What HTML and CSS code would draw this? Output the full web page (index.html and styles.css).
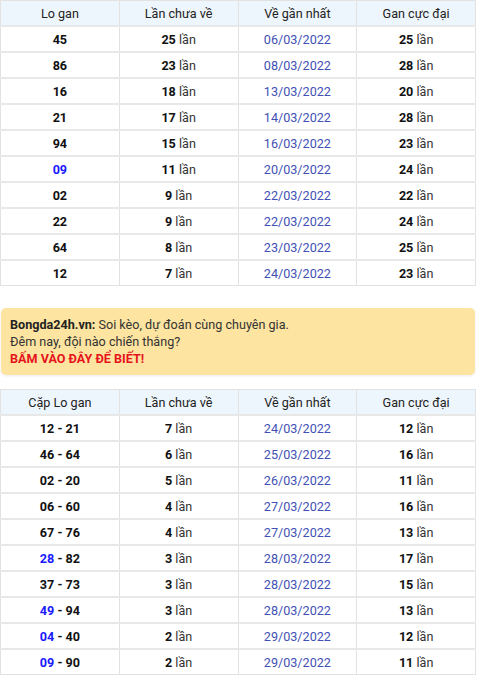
FILE: index.html
```html
<!DOCTYPE html>
<html lang="vi">
<head>
<meta charset="utf-8">
<link rel="stylesheet" href="styles.css">
</head>
<body>
<div class="page">
<table class="gan">
  <thead>
    <tr><th>Lo gan</th><th>Lần chưa về</th><th>Về gần nhất</th><th>Gan cực đại</th></tr>
  </thead>
  <tbody>
    <tr><td><b>45</b></td><td><b>25</b> lần</td><td class="date">06/03/2022</td><td><b>25</b> lần</td></tr>
    <tr><td><b>86</b></td><td><b>23</b> lần</td><td class="date">08/03/2022</td><td><b>28</b> lần</td></tr>
    <tr><td><b>16</b></td><td><b>18</b> lần</td><td class="date">13/03/2022</td><td><b>20</b> lần</td></tr>
    <tr><td><b>21</b></td><td><b>17</b> lần</td><td class="date">14/03/2022</td><td><b>28</b> lần</td></tr>
    <tr><td><b>94</b></td><td><b>15</b> lần</td><td class="date">16/03/2022</td><td><b>23</b> lần</td></tr>
    <tr><td><b class="hl">09</b></td><td><b>11</b> lần</td><td class="date">20/03/2022</td><td><b>24</b> lần</td></tr>
    <tr><td><b>02</b></td><td><b>9</b> lần</td><td class="date">22/03/2022</td><td><b>22</b> lần</td></tr>
    <tr><td><b>22</b></td><td><b>9</b> lần</td><td class="date">22/03/2022</td><td><b>24</b> lần</td></tr>
    <tr><td><b>64</b></td><td><b>8</b> lần</td><td class="date">23/03/2022</td><td><b>25</b> lần</td></tr>
    <tr><td><b>12</b></td><td><b>7</b> lần</td><td class="date">24/03/2022</td><td><b>23</b> lần</td></tr>
  </tbody>
</table>

<div class="promo">
  <div><b>Bongda24h.vn:</b> Soi kèo, dự đoán cùng chuyên gia.</div>
  <div>Đêm nay, đội nào chiến thắng?</div>
  <div class="cta">BẤM VÀO ĐÂY ĐỂ BIẾT!</div>
</div>

<table class="gan">
  <thead>
    <tr><th>Cặp Lo gan</th><th>Lần chưa về</th><th>Về gần nhất</th><th>Gan cực đại</th></tr>
  </thead>
  <tbody>
    <tr><td><b>12 - 21</b></td><td><b>7</b> lần</td><td class="date">24/03/2022</td><td><b>12</b> lần</td></tr>
    <tr><td><b>46 - 64</b></td><td><b>6</b> lần</td><td class="date">25/03/2022</td><td><b>16</b> lần</td></tr>
    <tr><td><b>02 - 20</b></td><td><b>5</b> lần</td><td class="date">26/03/2022</td><td><b>11</b> lần</td></tr>
    <tr><td><b>06 - 60</b></td><td><b>4</b> lần</td><td class="date">27/03/2022</td><td><b>16</b> lần</td></tr>
    <tr><td><b>67 - 76</b></td><td><b>4</b> lần</td><td class="date">27/03/2022</td><td><b>13</b> lần</td></tr>
    <tr><td><b><span class="hl">28</span> - 82</b></td><td><b>3</b> lần</td><td class="date">28/03/2022</td><td><b>17</b> lần</td></tr>
    <tr><td><b>37 - 73</b></td><td><b>3</b> lần</td><td class="date">28/03/2022</td><td><b>15</b> lần</td></tr>
    <tr><td><b><span class="hl">49</span> - 94</b></td><td><b>3</b> lần</td><td class="date">28/03/2022</td><td><b>13</b> lần</td></tr>
    <tr><td><b><span class="hl">04</span> - 40</b></td><td><b>2</b> lần</td><td class="date">29/03/2022</td><td><b>12</b> lần</td></tr>
    <tr><td><b><span class="hl">09</span> - 90</b></td><td><b>2</b> lần</td><td class="date">29/03/2022</td><td><b>11</b> lần</td></tr>
  </tbody>
</table>
</div>
</body>
</html>
```
FILE: styles.css
```css
html, body {
  margin: 0;
  padding: 0;
  background: #fff;
}
body {
  font-family: Roboto, "Liberation Sans", Arial, sans-serif;
  font-size: 12.6px;
  color: #333;
}
.page {
  width: 476px;
  display: flex;
  flex-direction: column;
}
.gan {
  width: 476px;
  border-collapse: collapse;
  table-layout: fixed;
}
.gan th, .gan td {
  border: 1px solid #e2e2e2;
  text-align: center;
  height: 24px;
  padding: 0;
}
.gan th {
  background: #eef6fd;
  font-weight: normal;
  color: #222;
}
.gan td b {
  color: #111;
  font-weight: bold;
}
.gan td b.hl, .gan td .hl {
  color: #1a1aff;
}
.gan td.date {
  color: #3f51b5;
}
.gan tbody tr {
  border-top: 2px solid #e8e8e8;
}
.promo {
  margin: 22px 0 14px 1px;
  width: 474px;
  box-sizing: border-box;
  background: #fde4a0;
  border-radius: 5px;
  padding: 8px 8px 8px 9px;
  line-height: 17px;
  font-size: 12.6px;
  color: #333;
  box-shadow: 0 1px 3px rgba(0,0,0,0.08);
}
.promo b {
  color: #222;
}
.promo .cta {
  color: #e5141c;
  font-weight: bold;
}
```
